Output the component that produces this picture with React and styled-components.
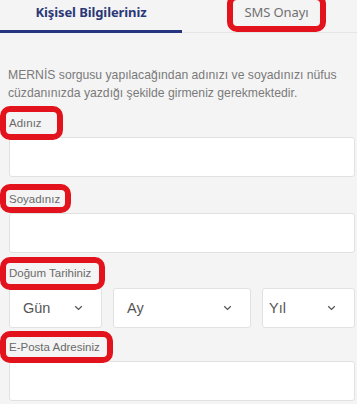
import React from 'react';
import styled, { createGlobalStyle } from 'styled-components';

const GlobalStyle = createGlobalStyle`
  html, body {
    margin: 0;
    padding: 0;
    background: #f4f4f4;
  }
  body {
    font-family: "Liberation Sans", Arial, sans-serif;
  }
`;

const Page = styled.div`
  width: 357px;
  height: 404px;
  overflow: hidden;
  background: #f4f4f4;
  font-family: "Liberation Sans", Arial, sans-serif;
`;

const Tabs = styled.div`
  display: grid;
  grid-template-columns: 182px 1fr;
  border-bottom: 1px solid #e6e6e6;
`;

const Tab = styled.div`
  height: 33px;
  display: flex;
  align-items: center;
  justify-content: center;
  padding-left: ${({ $shift }) => $shift || 0}px;
  padding-bottom: 6px;
  box-sizing: border-box;
  font-family: "Noto Sans", Lato, sans-serif;
  font-size: 13px;
  font-weight: ${({ $active }) => ($active ? 700 : 400)};
  color: ${({ $active }) => ($active ? '#2b3877' : '#707070')};
  border-bottom: 3px solid ${({ $active }) => ($active ? '#263580' : 'transparent')};
  margin-bottom: -1px;
  letter-spacing: -0.1px;
`;

// red hand-drawn marker boxes over the screenshot
const Marked = styled.span`
  position: relative;
  display: inline-block;
  line-height: 16px;

  &::after {
    content: '';
    position: absolute;
    top: ${({ $t }) => $t}px;
    right: ${({ $r }) => $r}px;
    bottom: ${({ $b }) => $b}px;
    left: ${({ $l }) => $l}px;
    border: 6px solid #e3131d;
    border-radius: 10px;
    pointer-events: none;
  }
`;

const Content = styled.div`
  padding: 33px 2px 0 9px;
`;

const Info = styled.p`
  margin: 0 0 13px -1px;
  font-size: 12.2px;
  line-height: 18px;
  color: #7a7a7a;
`;

const Field = styled.div`
  margin-bottom: ${({ $mb }) => ($mb === undefined ? 14 : $mb)}px;
`;

const Label = styled.div`
  font-size: 11.5px;
  line-height: 14px;
  color: #6a6a6a;
  margin-bottom: 6px;
`;

const Input = styled.div`
  height: 40px;
  box-sizing: border-box;
  background: #fff;
  border: 1px solid #e1e1e1;
  border-radius: 3px;
`;

const SelectRow = styled.div`
  display: grid;
  grid-template-columns: 93px 138px 93px;
  justify-content: space-between;
  padding-top: 1px;
`;

const Select = styled.div`
  height: 40px;
  box-sizing: border-box;
  background: #fff;
  border: 1px solid #e1e1e1;
  border-radius: 3px;
  display: flex;
  align-items: center;
  justify-content: space-between;
  padding: 0 18px 0 ${({ $pad }) => $pad}px;
  font-size: 14.5px;
  color: #555;
`;

const Chevron = () => (
  <svg width="9" height="6" viewBox="0 0 9 6">
    <polyline points="1.2,1.2 4.5,4.4 7.8,1.2" fill="none" stroke="#555" strokeWidth="1.3" />
  </svg>
);

export default function App() {
  return (
    <Page>
      <GlobalStyle />
      <Tabs>
        <Tab $active>Kişisel Bilgileriniz</Tab>
        <Tab $shift={14}>
          <Marked $t={-10} $r={-17} $b={-12} $l={-17}>SMS Onayı</Marked>
        </Tab>
      </Tabs>
      <Content>
        <Info>
          MERNİS sorgusu yapılacağından adınızı ve soyadınızı nüfus cüzdanınızda yazdığı şekilde girmeniz gerekmektedir.
        </Info>
        <Field>
          <Label>
            <Marked $t={-9} $r={-21} $b={-9} $l={-9}>Adınız</Marked>
          </Label>
          <Input />
        </Field>
        <Field $mb={12}>
          <Label>
            <Marked $t={-7} $r={-11} $b={-6} $l={-9}>Soyadınız</Marked>
          </Label>
          <Input />
        </Field>
        <Field $mb={11}>
          <Label>
            <Marked $t={-8} $r={-14} $b={-9} $l={-9}>Doğum Tarihiniz</Marked>
          </Label>
          <SelectRow>
            <Select $pad={13}>Gün<Chevron /></Select>
            <Select $pad={13}>Ay<Chevron /></Select>
            <Select $pad={6}>Yıl<Chevron /></Select>
          </SelectRow>
        </Field>
        <Field>
          <Label>
            <Marked $t={-8} $r={-13} $b={-8} $l={-9}>E-Posta Adresiniz</Marked>
          </Label>
          <Input />
        </Field>
      </Content>
    </Page>
  );
}
